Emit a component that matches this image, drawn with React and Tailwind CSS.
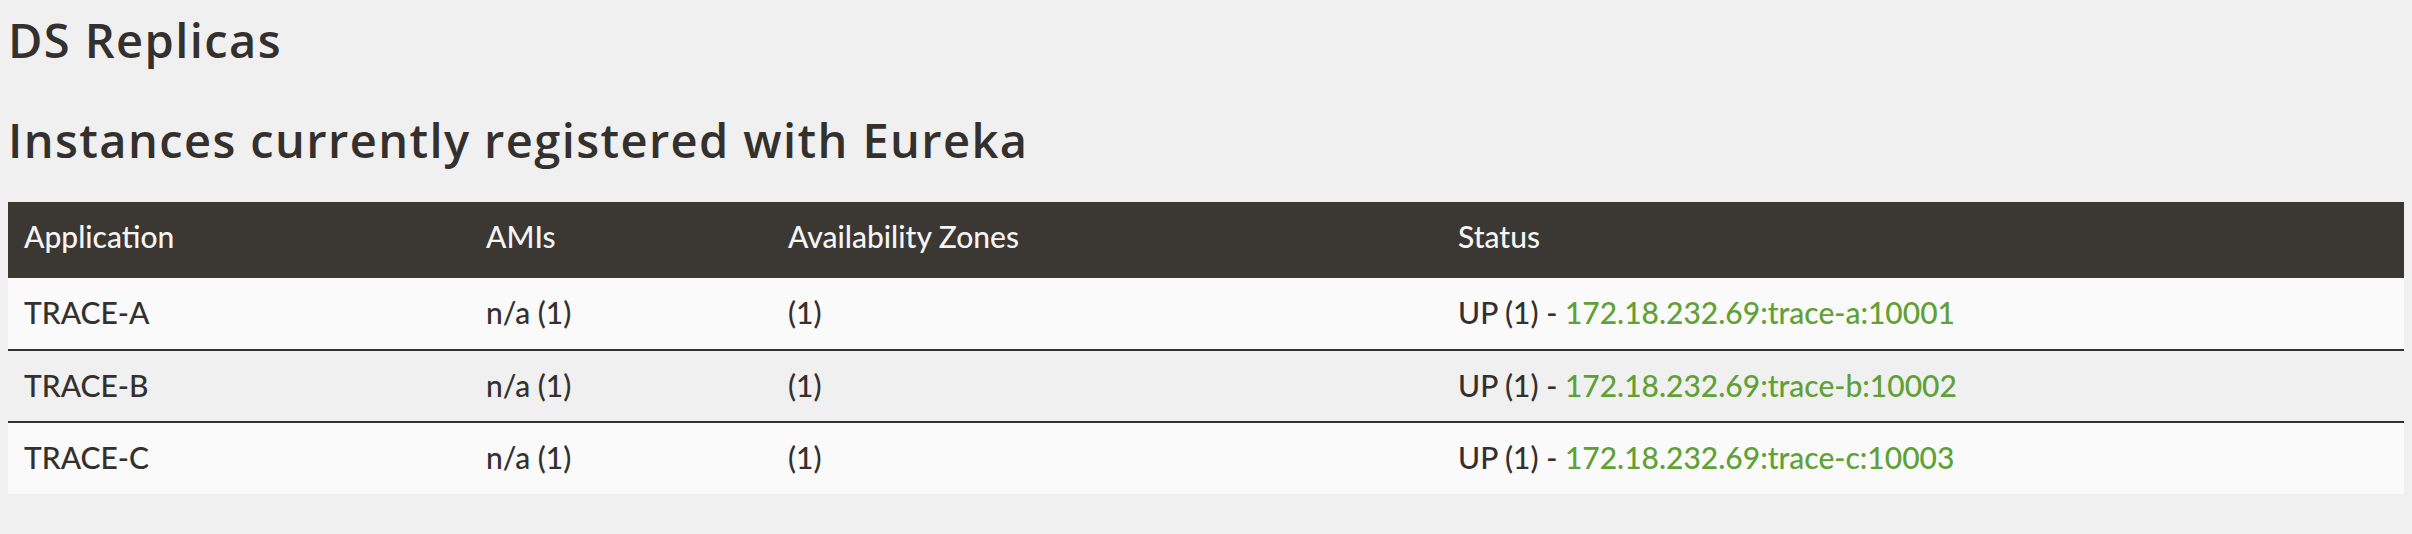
const rows = [
  { app: "TRACE-A", amis: "n/a (1)", zones: "(1)", link: "172.18.232.69:trace-a:10001" },
  { app: "TRACE-B", amis: "n/a (1)", zones: "(1)", link: "172.18.232.69:trace-b:10002" },
  { app: "TRACE-C", amis: "n/a (1)", zones: "(1)", link: "172.18.232.69:trace-c:10003" },
];

export default function App() {
  return (
    <div className="min-h-screen bg-[#f0f0f0] px-2 pt-[10px] text-[#34302d]">
      <h1 className="font-['Open_Sans',sans-serif] text-[47px] leading-[60px] font-semibold tracking-[1.4px]">DS Replicas</h1>
      <h1 className="mt-[40px] font-['Open_Sans',sans-serif] text-[47px] leading-[60px] font-semibold tracking-[1.4px]">
        Instances currently registered with Eureka
      </h1>
      <table className="mt-[32px] w-full border-collapse font-['Lato',sans-serif] text-[30px] font-medium text-[#34302d]">
        <thead>
          <tr className="h-[76px] bg-[#3b3732] text-left text-[#f5f5f5]">
            <th className="w-[462px] px-4 pb-[8px] font-medium">Application</th>
            <th className="w-[302px] px-4 pb-[8px] font-medium">AMIs</th>
            <th className="w-[670px] px-4 pb-[8px] font-medium">Availability Zones</th>
            <th className="px-4 pb-[8px] font-medium">Status</th>
          </tr>
        </thead>
        <tbody>
          {rows.map((r, i) => (
            <tr
              key={r.app}
              className={`h-[72px] ${i % 2 === 0 ? "bg-[#fafafa]" : "bg-[#f0f0f0]"} ${i > 0 ? "border-t-2 border-[#333]" : ""}`}
            >
              <td className="px-4 pb-[2px]">{r.app}</td>
              <td className="px-4 pb-[2px]">{r.amis}</td>
              <td className="px-4 pb-[2px]">{r.zones}</td>
              <td className="px-4 pb-[2px]">
                UP (1) - <a className="text-[#5fa134]">{r.link}</a>
              </td>
            </tr>
          ))}
        </tbody>
      </table>
    </div>
  );
}
